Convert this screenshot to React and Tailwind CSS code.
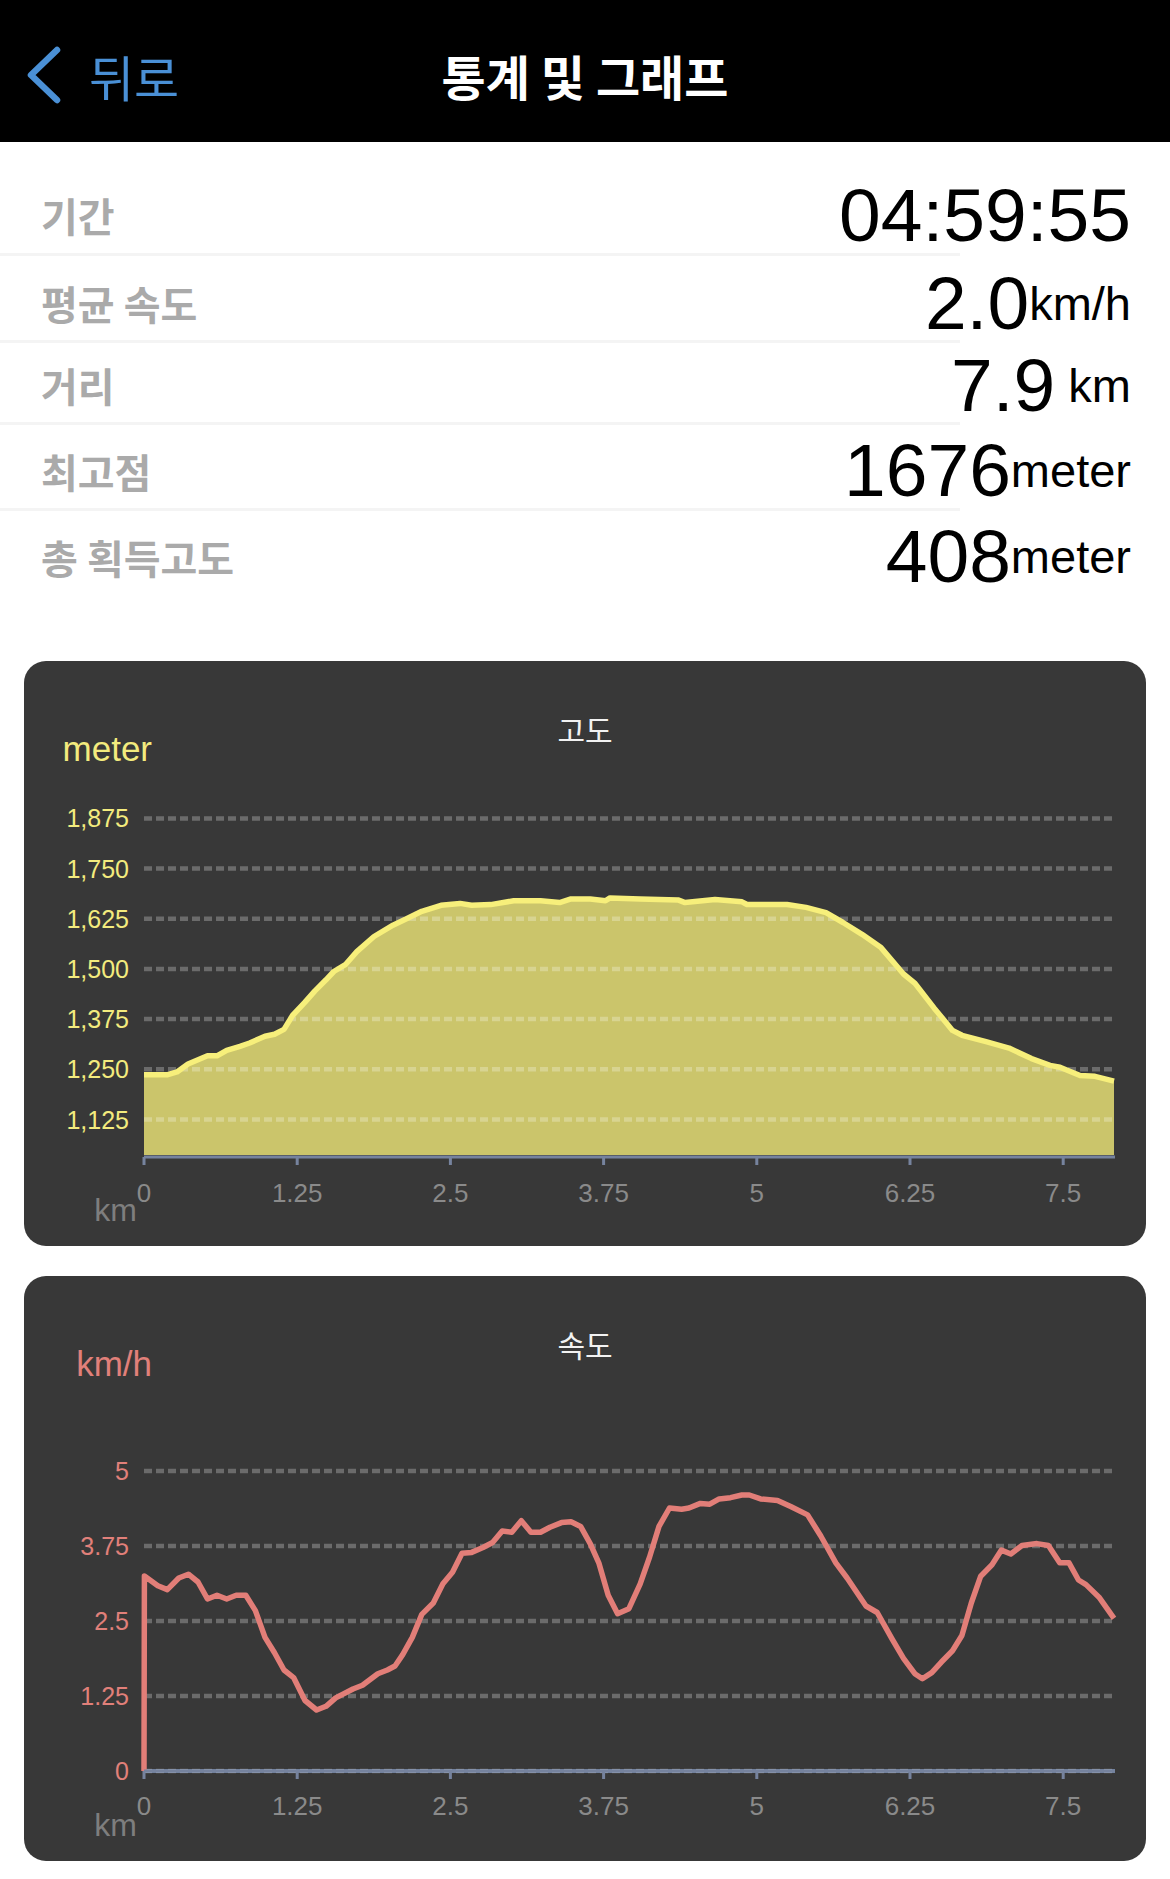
import React from 'react';

const stats = [
    { label: '기간', value: '04:59:55', unit: '', row: 'h-[111px] pt-[35px]' },
    { label: '평균 속도', value: '2.0', unit: 'km/h', row: 'h-[84px] pt-[10px]' },
    { label: '거리', value: '7.9', unit: ' km', row: 'h-[79px] pt-[5px]' },
    { label: '최고점', value: '1676', unit: 'meter', row: 'h-[83px] pt-[8px]' },
    { label: '총 획득고도', value: '408', unit: 'meter', row: 'h-[83px] pt-[8px]' },
];

// points in page pixels (y read off a slightly stretched crop, fixed below)
const elevationRaw = [
    [144, 1082], [167, 1082], [177, 1079], [188, 1071], [207.5, 1062.6], [217, 1062.6],
    [226.7, 1057], [240, 1053], [249.6, 1049.6], [265, 1042.7], [274.5, 1040.8], [284, 1035.8],
    [292.5, 1021.6], [305, 1008], [314.7, 996.8], [326, 985.3], [333.8, 976.9], [345.3, 970],
    [356.8, 956.6], [374, 941.3], [393, 929.8], [406.5, 923.3], [421.8, 915.6], [441, 909.5],
    [460, 907.6], [471.6, 909.5], [490.7, 908.8], [513.7, 905], [540.5, 905], [559.6, 906.8],
    [571, 903], [590.2, 903], [605.5, 905], [610, 902], [640, 903], [678, 904], [685, 906.8],
    [715, 903.7], [742, 906], [747, 908.7], [787, 908.7], [806, 911.7], [826, 917], [843, 927],
    [862, 939], [881, 952.6], [903.5, 979.4], [915, 989], [934, 1013.9], [952.5, 1036.8],
    [962, 1041.8], [986, 1048.3], [1009, 1054.8], [1031.5, 1065.5], [1050, 1072.4],
    [1060, 1074.3], [1080, 1082.7], [1095, 1083.5], [1114, 1088.4],
];
const elevation = elevationRaw.map(([x, y]) => [x, +(660 + (y - 660) * 0.983).toFixed(1)]);

const speed = [
    [144, 1771], [144.4, 1576], [157.8, 1585.7], [167.3, 1589.6], [178.8, 1578], [188.4, 1574.2],
    [198, 1582], [207.5, 1599], [217, 1595.3], [226.7, 1599], [236.2, 1595.3], [245.8, 1595.3],
    [255.4, 1610.6], [265, 1637.4], [274.5, 1652.7], [284, 1670], [293.6, 1677.6], [305, 1700.5],
    [316.6, 1710], [326, 1706.3], [335.7, 1697.9], [353, 1689], [362.5, 1685.2], [377.8, 1673.7],
    [387.4, 1670], [395, 1666], [402.7, 1654.6], [412.3, 1637.4], [421.8, 1614.4], [433.3, 1603],
    [442.9, 1583.8], [452.5, 1572.3], [462, 1553.2], [471.6, 1552.4], [483, 1547.5],
    [492.6, 1542.5], [502.2, 1531], [511.8, 1532.2], [521.3, 1520.7], [530.9, 1532.2],
    [540.5, 1532.2], [550, 1527.2], [561.5, 1522.6], [571, 1521.8], [580.6, 1526.4],
    [590.2, 1543.6], [598.8, 1562.8], [608.2, 1595.3], [617.6, 1613.7], [628.9, 1608.7],
    [640.2, 1583.8], [649.6, 1557], [659, 1526.4], [669.5, 1508], [681.6, 1509.2], [689, 1508],
    [700.4, 1503.4], [709.8, 1504.2], [719.2, 1498.9], [730.5, 1497.7], [741.8, 1495],
    [749.3, 1495], [760.6, 1498.9], [777.5, 1500.4], [790.7, 1506.5], [807.6, 1514.9],
    [820.8, 1536], [835.8, 1562.8], [847.1, 1578], [866, 1606], [877.2, 1612.5], [892.3, 1639.3],
    [903.5, 1658.4], [914.8, 1673.7], [922.4, 1678.7], [931.8, 1672.6], [941.2, 1662.3],
    [952.5, 1650.8], [961.9, 1635.5], [971.3, 1603], [980.7, 1576.2], [992, 1564.7],
    [1001.4, 1550.1], [1010.8, 1554], [1022, 1545.5], [1037, 1543.6], [1048.4, 1545.5],
    [1059.7, 1562.8], [1069, 1562.8], [1078.5, 1580], [1086, 1584.6], [1099, 1597.2],
    [1114, 1618.3],
];

const xTicks = ['0', '1.25', '2.5', '3.75', '5', '6.25', '7.5'];
const pts = (arr) => arr.map(([x, y]) => `${x},${y}`).join(' ');

const Axis = ({ y, labelY, kmY }) => (
    <>
        <line x1="144" y1={y} x2="1115" y2={y} stroke="#76839e" strokeWidth="3" />
        {xTicks.map((t, i) => {
            const x = 144 + i * 153.2;
            return (
                <g key={t}>
                    <line x1={x} y1={y} x2={x} y2={y + 8} stroke="#76839e" strokeWidth="3" />
                    <text x={x} y={labelY} textAnchor="middle" fontSize="26" fill="#8a8a8a">{t}</text>
                </g>
            );
        })}
        <text x="137" y={kmY} textAnchor="end" fontSize="32" fill="#7e7e7e">km</text>
    </>
);

const Grid = ({ ys, labels, color }) => (
    <>
        {ys.map((y, i) => (
            <g key={y}>
                <line x1="144" y1={y} x2="1113" y2={y} stroke="rgba(255,255,255,0.26)" strokeWidth="4.5" strokeDasharray="8 4" />
                <text x="129" y={y + 9} textAnchor="end" fontSize="25" fill={color}>{labels[i]}</text>
            </g>
        ))}
    </>
);

const ChartCard = ({ title, unit, unitClass, children, viewBox }) => (
    <div className="h-[585px] rounded-[22px] bg-[#383838] flex flex-col overflow-hidden">
        <div className="h-[140px] flex flex-col">
            <div className="pt-[53px] text-center text-[30px] leading-[30px] text-[#f2f2f2] font-['Noto_Sans_CJK_KR','Noto_Sans',sans-serif]">{title}</div>
            <div className={`-mt-[13px] w-[128px] text-right text-[35px] leading-[35px] ${unitClass}`}>{unit}</div>
        </div>
        <svg width="1122" height="445" viewBox={viewBox} className="block">{children}</svg>
    </div>
);

export default function App() {
    const elevFill = `${pts(elevation)} 1114,1155 144,1155`;
    return (
        <div className="w-[1170px] h-[1879px] bg-white overflow-hidden font-['Liberation_Sans',Arial,sans-serif]">
            {/* Header */}
            <div className="h-[142px] bg-black grid grid-cols-[1fr_auto_1fr] items-center pt-[8px] font-['Noto_Sans_CJK_KR','Noto_Sans',sans-serif]">
                <div className="flex items-center pl-[25px]">
                    <svg width="36" height="58" viewBox="0 0 36 58">
                        <polyline points="32,4 6,29 32,54" fill="none" stroke="#4a90d6" strokeWidth="6.5" strokeLinecap="round" strokeLinejoin="round" />
                    </svg>
                    <span className="ml-[28px] text-[49px] leading-none text-[#4a90d6]">뒤로</span>
                </div>
                <div className="text-[48px] leading-none font-semibold text-white">통계 및 그래프</div>
                <div />
            </div>

            {/* Stats */}
            <div>
                {stats.map((s, i) => (
                    <div key={s.label}>
                        <div className={`flex items-center justify-between pl-[41px] pr-[39px] ${s.row}`}>
                            <span className="text-[40px] leading-none font-semibold text-[#aaaaaa] font-['Noto_Sans_CJK_KR','Noto_Sans',sans-serif]">{s.label}</span>
                            <span className="flex items-center text-black">
                                <span className="text-[75px] leading-none">{s.value}</span>
                                {s.unit && <span className="text-[47px] leading-none whitespace-pre">{s.unit}</span>}
                            </span>
                        </div>
                        {i < stats.length - 1 && <div className="w-[960px] h-[3px] bg-[#f4f4f4]" />}
                    </div>
                ))}
            </div>

            {/* Charts */}
            <div className="mt-[67px] mx-[24px] flex flex-col gap-[30px]">
                <ChartCard title="고도" unit="meter" unitClass="text-[#f3eb7e]" viewBox="24 801 1122 445">
                    <polygon points={elevFill} fill="#cbc56b" />
                    <Grid
                        ys={[818.4, 868.6, 918.8, 969, 1019.1, 1069.3, 1119.5]}
                        labels={['1,875', '1,750', '1,625', '1,500', '1,375', '1,250', '1,125']}
                        color="#f3eb7e"
                    />
                    <polyline points={pts(elevation)} fill="none" stroke="#f7ef7b" strokeWidth="5.5" strokeLinejoin="round" />
                    <Axis y={1157} labelY={1202} kmY={1221} />
                </ChartCard>

                <ChartCard title="속도" unit="km/h" unitClass="text-[#e1807a]" viewBox="24 1416 1122 445">
                    <line x1="144" y1="1771" x2="1115" y2="1771" stroke="#6f7e9c" strokeWidth="4" />
                    <Grid
                        ys={[1471, 1546, 1621, 1696, 1771]}
                        labels={['5', '3.75', '2.5', '1.25', '0']}
                        color="#e1807a"
                    />
                    <polyline points={pts(speed)} fill="none" stroke="#e27e78" strokeWidth="5.5" strokeLinejoin="round" />
                    <Axis y={1771} labelY={1815} kmY={1836} />
                </ChartCard>
            </div>
        </div>
    );
}
